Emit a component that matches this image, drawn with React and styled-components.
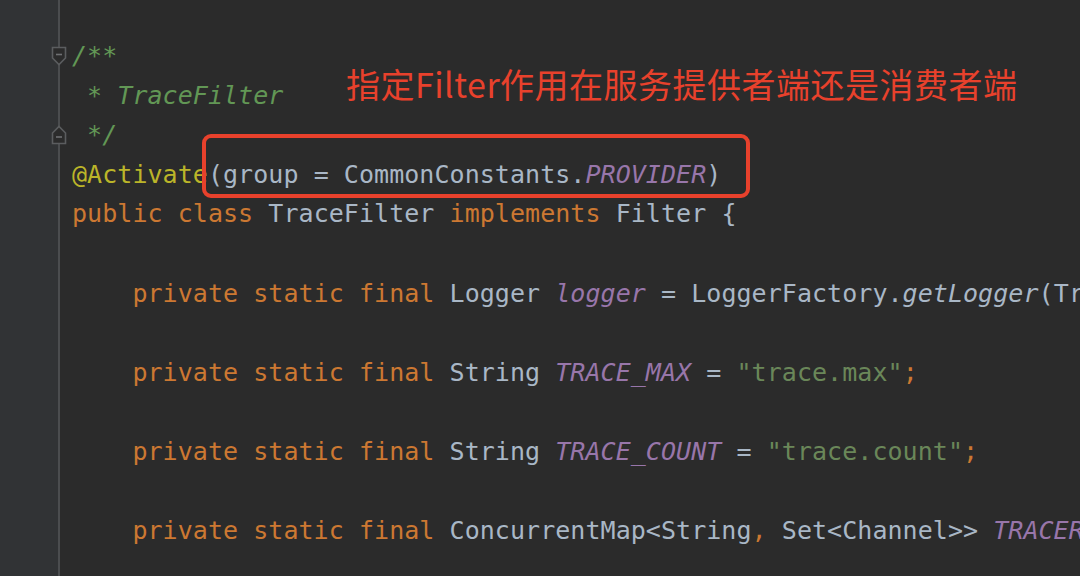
import styled, { createGlobalStyle } from "styled-components";

const GlobalStyle = createGlobalStyle`
  html, body {
    margin: 0;
    padding: 0;
    background: #2b2b2b;
  }
  #root {
    width: 1080px;
    height: 576px;
  }
`;

const code = [
  { fold: "open", parts: [["c", "/**"]] },
  { parts: [["c", " * TraceFilter"]] },
  { fold: "close", parts: [["c", " */"]] },
  {
    parts: [
      ["a", "@Activate"],
      ["t", "(group = CommonConstants."],
      ["f", "PROVIDER"],
      ["t", ")"],
    ],
  },
  {
    parts: [
      ["k", "public class "],
      ["t", "TraceFilter "],
      ["k", "implements "],
      ["t", "Filter {"],
    ],
  },
  { parts: [] },
  {
    parts: [
      ["k", "    private static final "],
      ["t", "Logger "],
      ["f", "logger"],
      ["t", " = LoggerFactory."],
      ["i", "getLogger"],
      ["t", "(TraceFilter.class);"],
    ],
  },
  { parts: [] },
  {
    parts: [
      ["k", "    private static final "],
      ["t", "String "],
      ["f", "TRACE_MAX"],
      ["t", " = "],
      ["s", '"trace.max"'],
      ["k", ";"],
    ],
  },
  { parts: [] },
  {
    parts: [
      ["k", "    private static final "],
      ["t", "String "],
      ["f", "TRACE_COUNT"],
      ["t", " = "],
      ["s", '"trace.count"'],
      ["k", ";"],
    ],
  },
  { parts: [] },
  {
    parts: [
      ["k", "    private static final "],
      ["t", "ConcurrentMap<String"],
      ["k", ", "],
      ["t", "Set<Channel>> "],
      ["f", "TRACERS"],
      ["t", " = new ConcurrentHashMap<>();"],
    ],
  },
];

export default function App() {
  return (
    <>
      <GlobalStyle />
      <Editor>
        <Gutter>
          {code.map((line, i) => (
            <GutterRow key={i}>
              {line.fold && <FoldMarker dir={line.fold} />}
            </GutterRow>
          ))}
        </Gutter>
        <Code>
          {code.map((line, i) => (
            <Line key={i}>
              {line.parts.map(([kind, text], j) => (
                <Token key={j} kind={kind}>
                  {text}
                </Token>
              ))}
            </Line>
          ))}
        </Code>
        <Note>指定Filter作用在服务提供者端还是消费者端</Note>
        <Highlight />
      </Editor>
    </>
  );
}

function FoldMarker({ dir }) {
  const shape =
    dir === "open"
      ? "M1.5 1.5 H14.5 V12 L8 18.5 L1.5 12 Z"
      : "M1.5 18.5 H14.5 V8 L8 1.5 L1.5 8 Z";
  const minusY = dir === "open" ? 8.5 : 12;
  return (
    <Marker width="16" height="20" viewBox="0 0 16 20">
      <path d={shape} fill="#2b2b2b" stroke="#5b5d5f" strokeWidth="1.6" />
      <line x1="5" y1={minusY} x2="11" y2={minusY} stroke="#6e7072" strokeWidth="1.6" />
    </Marker>
  );
}

const colors = {
  c: "#629755",
  a: "#bbb529",
  t: "#a9b7c6",
  k: "#cc7832",
  f: "#9876aa",
  i: "#a9b7c6",
  s: "#6a8759",
};

const Editor = styled.div`
  position: relative;
  display: flex;
  width: 1080px;
  height: 576px;
  overflow: hidden;
  background: #2b2b2b;
`;

const Gutter = styled.div`
  flex: 0 0 60px;
  width: 60px;
  min-width: 0;
  box-sizing: border-box;
  padding-top: 36px;
  background: #313335;
  border-right: 2px solid #4b4d4f;
`;

const GutterRow = styled.div`
  height: 39.6px;
  display: flex;
  align-items: center;
`;

const Marker = styled.svg`
  position: relative;
  z-index: 2;
  margin-left: 51px;
  flex: none;
`;

const Code = styled.div`
  flex: 1;
  min-width: 0;
  padding: 36px 0 0 12px;
  font-family: "DejaVu Sans Mono", "Liberation Mono", monospace;
  font-size: 25px;
  letter-spacing: 0.05px;
`;

const Line = styled.div`
  height: 39.6px;
  line-height: 39.6px;
  white-space: pre;
`;

const Token = styled.span`
  color: ${(p) => colors[p.kind]};
  font-style: ${(p) => (p.kind === "c" || p.kind === "f" || p.kind === "i" ? "italic" : "normal")};
`;

const Note = styled.div`
  position: absolute;
  left: 346px;
  top: 61px;
  font-family: "Noto Sans CJK SC", "Noto Sans", sans-serif;
  font-size: 34px;
  line-height: 46px;
  letter-spacing: 0.5px;
  color: #e8412c;
  white-space: nowrap;
`;

const Highlight = styled.div`
  position: absolute;
  left: 202px;
  top: 134px;
  width: 548px;
  height: 64px;
  box-sizing: border-box;
  border: 4px solid #e8412c;
  border-radius: 9px;
`;
